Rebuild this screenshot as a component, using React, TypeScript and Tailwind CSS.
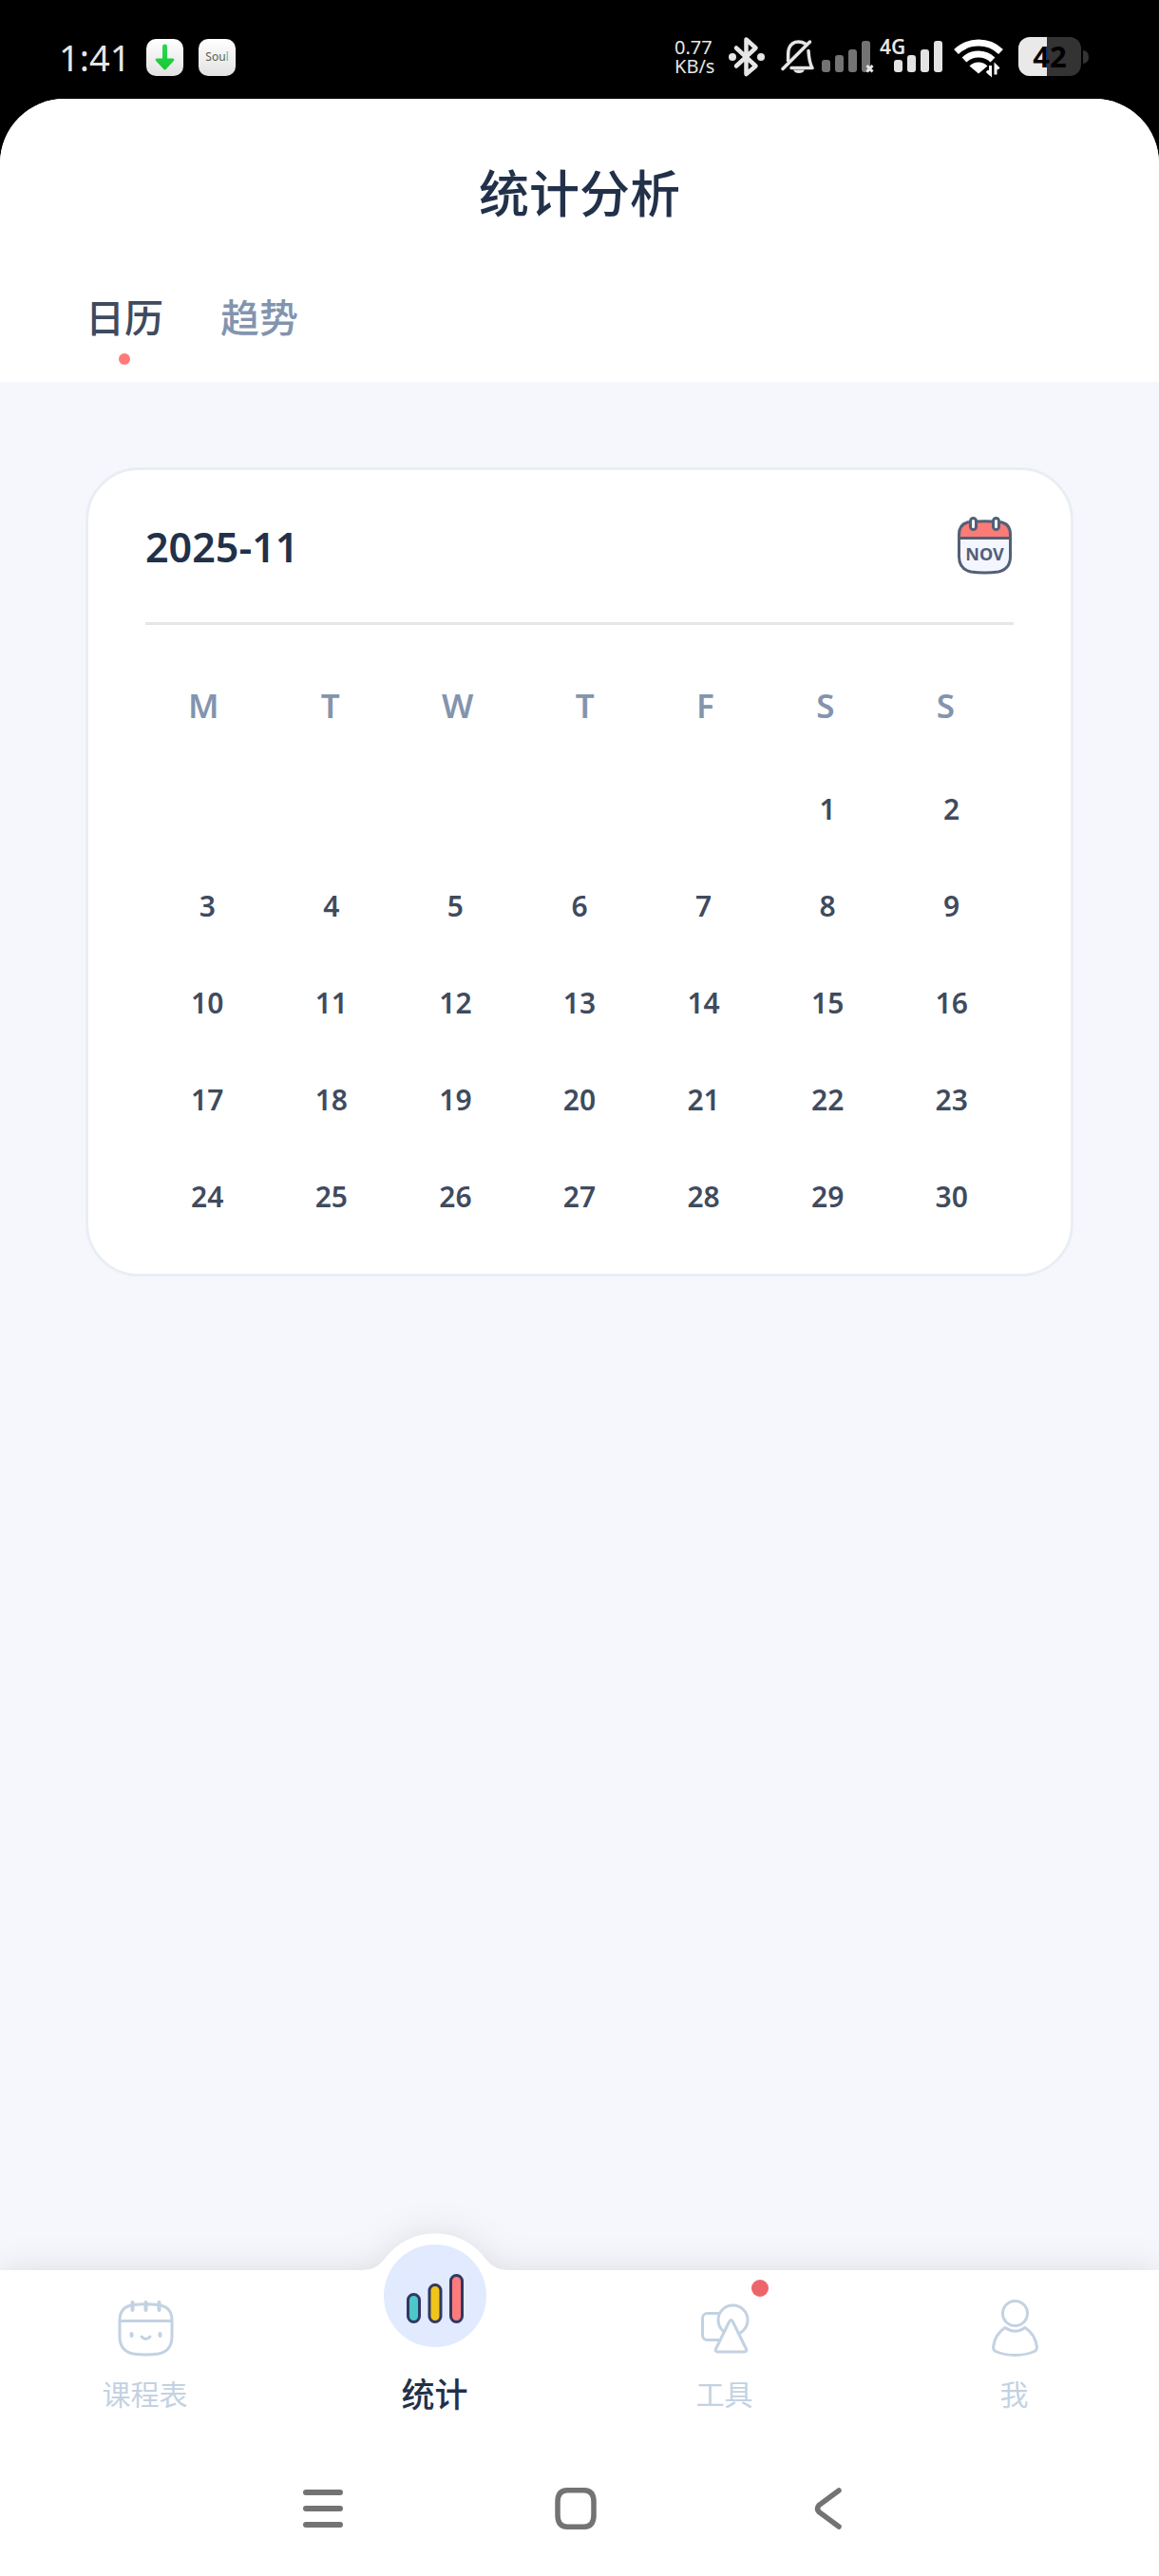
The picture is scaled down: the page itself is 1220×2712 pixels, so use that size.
import { useState, type ReactNode } from 'react';

const WEEKDAYS = ['M', 'T', 'W', 'T', 'F', 'S', 'S'];

const WEEKS: (number | null)[][] = [
  [null, null, null, null, null, 1, 2],
  [3, 4, 5, 6, 7, 8, 9],
  [10, 11, 12, 13, 14, 15, 16],
  [17, 18, 19, 20, 21, 22, 23],
  [24, 25, 26, 27, 28, 29, 30],
];

function DownloadAppIcon() {
  return (
    <svg width="39" height="39" viewBox="0 0 39 39" aria-hidden="true">
      <defs>
        <linearGradient id="tile" x1="0" y1="0" x2="0" y2="1">
          <stop offset="0" stopColor="#ffffff" />
          <stop offset="1" stopColor="#e2e2e2" />
        </linearGradient>
        <linearGradient id="arrow" x1="0" y1="0" x2="0" y2="1">
          <stop offset="0" stopColor="#2bd957" />
          <stop offset="1" stopColor="#17c930" />
        </linearGradient>
      </defs>
      <rect width="39" height="39" rx="10" fill="url(#tile)" />
      <path
        d="M17 8a2.500 2.500 0 0 1 5 0v12.500h6q2.500 0.500 0.500 3l-8 8.500q-1 1-2 0l-8-8.500q-2-2.500 0.500-3H17z"
        fill="url(#arrow)"
      />
    </svg>
  );
}

function BluetoothIcon() {
  return (
    <svg width="38" height="44" viewBox="0 0 38 44" fill="none" aria-hidden="true">
      <path
        d="M8 12.500 28.500 31.500 18.500 40V3.500L28.500 12.500 8 31.500"
        stroke="#e6e6e6"
        strokeWidth="4.500"
        strokeLinecap="round"
        strokeLinejoin="round"
      />
      <circle cx="4" cy="22" r="4" fill="#e6e6e6" />
      <circle cx="34" cy="22" r="4" fill="#e6e6e6" />
    </svg>
  );
}

function MutedBellIcon() {
  return (
    <svg width="44" height="44" viewBox="0 0 44 44" fill="none" aria-hidden="true">
      <path
        d="M16.500 25.500C17 22 16 17 17.500 13 19.500 8 23 6 27.500 6q4 0 7 2M38 15.500C38.500 24 39 28 42 33.500H20"
        stroke="#e6e6e6"
        strokeWidth="3.500"
        strokeLinecap="round"
        strokeLinejoin="round"
      />
      <path d="M11 34.500 39.500 6" stroke="#e6e6e6" strokeWidth="3.500" strokeLinecap="round" />
      <path d="M22 35.500h12q-1.500 3.500-6 3.500t-6-3.500z" fill="#e6e6e6" />
    </svg>
  );
}

function NoSignalIcon() {
  return (
    <svg width="55" height="44" viewBox="0 0 55 44" aria-hidden="true">
      <g fill="#737373">
        <rect x="0" y="25" width="9" height="13" rx="3" />
        <rect x="14" y="20" width="9" height="18" rx="3" />
        <rect x="28" y="14" width="9" height="24" rx="3" />
        <rect x="42" y="5" width="9" height="33" rx="3" />
      </g>
      <path d="m47.500 31 6 6.500m0-6.500-6 6.500" stroke="#e6e6e6" strokeWidth="3" />
    </svg>
  );
}

function MobileSignalIcon() {
  return (
    <svg className="overflow-visible" width="64" height="44" viewBox="0 0 64 44" aria-hidden="true">
      <g fill="#e3e3e3">
        <rect x="13" y="25" width="9" height="13" rx="3" />
        <rect x="27" y="20" width="9" height="18" rx="3" />
        <rect x="41" y="14" width="9" height="24" rx="3" />
        <rect x="55" y="5" width="9" height="33" rx="3" />
      </g>
      <text x="-2" y="19" fontSize="21" fontWeight="600" fill="#e6e6e6">
        4G
      </text>
    </svg>
  );
}

function WifiIcon() {
  return (
    <svg width="60" height="44" viewBox="0 0 60 44" fill="none" aria-hidden="true">
      <path d="M6.500 16.500a34 34 0 0 1 47 0" stroke="#fff" strokeWidth="7" />
      <path d="M15 25a22 22 0 0 1 30 0" stroke="#fff" strokeWidth="7" />
      <path d="M20.500 31.500a13.500 13.500 0 0 1 19 0L30 39.500z" fill="#fff" />
      <path d="M37.500 44V35l5-6H56v15z" fill="#000" />
      <path d="m39 36.500 3.500 3.500V31M51.500 34.500 48 31v9.500M39 37l3.500 3.500" stroke="#fff" strokeWidth="3" />
    </svg>
  );
}

function BatteryIcon() {
  return (
    <svg width="78" height="44" viewBox="0 0 78 44" aria-hidden="true">
      <path d="M72 15q6 1 6 7t-6 7z" fill="#333" />
      <rect x="4" y="1" width="66" height="41" rx="12" fill="#333" />
      <path d="M34 1v41H16A12 12 0 0 1 4 30V13A12 12 0 0 1 16 1z" fill="#e9e9e9" />
      <text x="37" y="33" fontSize="31" fontWeight="700" textAnchor="middle" fill="#000">
        42
      </text>
    </svg>
  );
}

function StatusBar() {
  return (
    <div className="flex h-[104px] items-center justify-between pt-4 pr-[74px] pl-[62px] text-[#e6e6e6]">
      <div className="flex items-center gap-4">
        <span className="w-[76px] text-[38px] leading-[44px]">1:41</span>
        <DownloadAppIcon />
        <span className="flex size-[39px] items-center justify-center rounded-[10px] bg-linear-to-b from-white to-[#e2e2e2] text-[12px] leading-none text-[#5c5c50]">
          Sou<span className="text-[#25d5b0]">l</span>
        </span>
      </div>
      <div className="flex items-center gap-2">
        <div className="flex w-[49px] flex-col text-[20px] leading-[20px]">
          <span>0.77</span>
          <span>KB/s</span>
        </div>
        <BluetoothIcon />
        <MutedBellIcon />
        <NoSignalIcon />
        <MobileSignalIcon />
        <WifiIcon />
        <BatteryIcon />
      </div>
    </div>
  );
}

function MonthIcon() {
  return (
    <svg width="60" height="64" viewBox="0 0 60 64" aria-hidden="true">
      <path
        d="M2.500 20Q2.500 7 15 6.500 29.500 5 44 6.500 56.500 7 56.500 20V43Q56.500 56 44 59 29.500 61 15 59 2.500 56 2.500 43z"
        fill="#f4f6ff"
      />
      <path d="M2.500 23.500V20Q2.500 7 15 6.500 29.500 5 44 6.500 56.500 7 56.500 20v3.500z" fill="#fb7b77" />
      <path
        d="M2.500 20Q2.500 7 15 6.500 29.500 5 44 6.500 56.500 7 56.500 20V43Q56.500 56 44 59 29.500 61 15 59 2.500 56 2.500 43zM2.500 23.500h54"
        fill="none"
        stroke="#526076"
        strokeWidth="3"
      />
      <rect x="14.500" y="2.500" width="6" height="12" rx="3" fill="#fff" stroke="#526076" strokeWidth="3" />
      <rect x="38.500" y="2.500" width="6" height="12" rx="3" fill="#fff" stroke="#526076" strokeWidth="3" />
      <text x="29.500" y="47" fontSize="18" fontWeight="700" textAnchor="middle" fill="#526076">
        NOV
      </text>
    </svg>
  );
}

function ScheduleIcon() {
  return (
    <svg width="64" height="64" viewBox="0 0 64 64" fill="none" stroke="#c3d2e2" strokeWidth="3" strokeLinecap="round" aria-hidden="true">
      <path d="M5 23Q5 8 20 6.500 32.500 5 45 6.500 60 8 60 23V40Q60 55 46 58 32.500 60 19 58 5 55 5 40zM5 23.500h55" />
      <path d="M18.500 4v8M32.500 4v8M46.500 4v8M17.500 37v2M47.500 37v2" strokeWidth="4" />
      <path d="M28 40q4.500 5 9 0" />
    </svg>
  );
}

function StatsIcon() {
  return (
    <svg width="108" height="108" viewBox="0 0 108 108" stroke="#303863" strokeWidth="3" aria-hidden="true">
      <rect x="25.500" y="52.500" width="12" height="29" rx="6" fill="#4cc8cb" />
      <rect x="48" y="42.500" width="12" height="39" rx="6" fill="#f0c419" />
      <rect x="70.500" y="32.500" width="12" height="49" rx="6" fill="#ff7b7b" />
    </svg>
  );
}

function ToolsIcon() {
  return (
    <svg width="64" height="64" viewBox="0 0 64 64" fill="#fff" stroke="#c3d2e2" strokeWidth="3" strokeLinejoin="round" aria-hidden="true">
      <rect x="8.500" y="15.500" width="30" height="28" rx="5" />
      <circle cx="40.500" cy="22.500" r="15.500" />
      <path d="M36.500 24.500q2-4 4 0L54.500 53q1 3-2 3H24.500q-3 0-2-3z" />
    </svg>
  );
}

function ProfileIcon() {
  return (
    <svg width="64" height="64" viewBox="0 0 64 64" fill="none" stroke="#c3d2e2" strokeWidth="3" strokeLinejoin="round" aria-hidden="true">
      <circle cx="32.500" cy="15.500" r="13" />
      <path d="M22 30.500Q32.500 38 43 30.500C50 35 54.500 43 55.500 51Q55.500 54 53 55.500 44 59.500 32.500 59.500T12 55.500Q9.500 54 9.500 51C10.500 43 15 35 22 30.500z" />
    </svg>
  );
}

function CalendarCard() {
  return (
    <section className="mx-[90px] mt-[90px] rounded-[56px] border-3 border-[#e9eef5] bg-white px-[60px] pb-[30px]">
      <div className="flex items-center justify-between border-b-3 border-[#e6e6e6] py-[48px]">
        <h2 className="text-[43px] leading-[63px] font-semibold text-[#22314a]">2025-11</h2>
        <button type="button" aria-label="选择月份">
          <MonthIcon />
        </button>
      </div>
      <table className="block">
        <thead className="block pt-[55px] pb-[28px]">
          <tr className="flex justify-between pr-[62px] pl-[45px]">
            {WEEKDAYS.map((day, i) => (
              <th key={i} scope="col" className="text-[35px] leading-[60px] font-semibold text-[#8394ae]">
                {day}
              </th>
            ))}
          </tr>
        </thead>
        <tbody className="block">
          {WEEKS.map((week, i) => (
            <tr key={i} className="grid grid-cols-7">
              {week.map((date, j) => (
                <td key={j} className="h-[102px] text-center text-[30px] leading-[102px] font-semibold text-[#3f4b5e]">
                  {date}
                </td>
              ))}
            </tr>
          ))}
        </tbody>
      </table>
    </section>
  );
}

function NavItem({ label, children, badge }: { label: string; children: ReactNode; badge?: boolean }) {
  return (
    <button type="button" className="relative flex flex-1 flex-col items-center pt-[30px] text-[#c3d2e2]">
      {children}
      {badge && <span className="absolute top-[10px] left-1/2 ml-[28px] size-[18px] rounded-full bg-[#ee6569]" />}
      <span className="mt-[17px] text-[30px] leading-[40px]">{label}</span>
    </button>
  );
}

function BottomNav() {
  return (
    <nav className="flex bg-white pb-[39px] drop-shadow-[0_0_18px_rgba(0,0,0,0.1)]">
      <NavItem label="课程表">
        <ScheduleIcon />
      </NavItem>
      <button type="button" aria-current="page" className="relative flex flex-1 flex-col items-center text-[#22314a]">
        <svg className="absolute -top-[39px] left-1/2 -ml-[80px]" width="160" height="41" viewBox="0 0 160 41" fill="#fff" aria-hidden="true">
          <path d="M2 39C14 39 21 35 27 27A66 66 0 0 1 133 27C139 35 146 39 158 39V41H2z" />
        </svg>
        <span className="relative -mt-[27px] rounded-full bg-[#e1eaff]">
          <StatsIcon />
        </span>
        <span className="mt-[30px] text-[35px] leading-[40px] font-medium">统计</span>
      </button>
      <NavItem label="工具" badge>
        <ToolsIcon />
      </NavItem>
      <NavItem label="我">
        <ProfileIcon />
      </NavItem>
    </nav>
  );
}

function SystemNav() {
  return (
    <div className="relative flex justify-center gap-[222px] bg-white pt-[37px] pr-[8px] pb-[47px]">
      <button type="button" aria-label="最近任务">
        <svg width="44" height="48" viewBox="0 0 44 48" stroke="#737373" strokeWidth="6" strokeLinecap="round" aria-hidden="true">
          <path d="M4 7h36M4 24h36M4 41h36" />
        </svg>
      </button>
      <button type="button" aria-label="主屏幕">
        <svg width="44" height="48" viewBox="0 0 44 48" fill="none" stroke="#737373" strokeWidth="5.500" aria-hidden="true">
          <path d="M3 17Q3 5 13 4.800H31Q41 5 41 17V31Q41 43 31 43.200H13Q3 43 3 31z" />
        </svg>
      </button>
      <button type="button" aria-label="返回">
        <svg width="44" height="48" viewBox="0 0 44 48" fill="none" stroke="#737373" strokeWidth="5.500" strokeLinecap="round" aria-hidden="true">
          <path d="M33 5 12 20.500Q9 24 12 27.500L33 43" />
        </svg>
      </button>
    </div>
  );
}

export default function App() {
  const [tab, setTab] = useState('日历');

  return (
    <div className="flex min-h-screen flex-col bg-black font-['Noto_Sans','Noto_Sans_CJK_SC',sans-serif]">
      <StatusBar />
      <main className="flex flex-1 flex-col overflow-hidden rounded-t-[68px] bg-[#f5f7fc]">
        <header className="bg-white pt-[64px] pb-[18px]">
          <h1 className="text-center text-[53px] leading-[72px] font-medium text-[#22314a]">统计分析</h1>
          <div role="tablist" className="mt-[64px] flex gap-[60px] px-[90px]">
            {['日历', '趋势'].map((name) => (
              <button
                key={name}
                type="button"
                role="tab"
                aria-selected={tab === name}
                onClick={() => setTab(name)}
                className={
                  tab === name
                    ? 'flex flex-col items-center gap-2 text-[41px] leading-[60px] font-medium text-[#3f4b5e]'
                    : 'flex flex-col items-center gap-2 text-[41px] leading-[60px] font-medium text-[#8394ae]'
                }
              >
                {name}
                <span className={tab === name ? 'size-3 rounded-full bg-[#ff7b77]' : 'size-3'} />
              </button>
            ))}
          </div>
        </header>
        <div className="flex-1">
          <CalendarCard />
        </div>
        <BottomNav />
        <SystemNav />
      </main>
    </div>
  );
}
